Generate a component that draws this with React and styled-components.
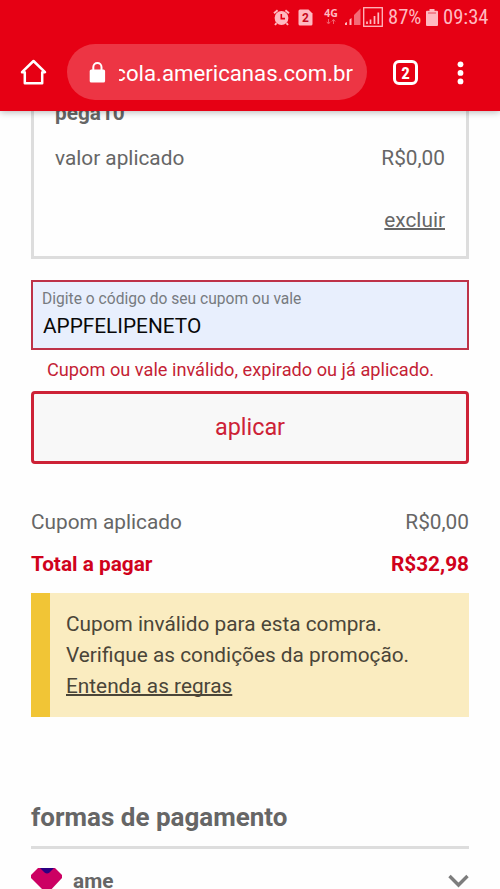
import React from "react";
import styled, { createGlobalStyle } from "styled-components";

const GlobalStyle = createGlobalStyle`
  * {
    box-sizing: border-box;
  }

  body {
    margin: 0;
    background-color: #fefefe;
    font-family: Roboto, "Liberation Sans", sans-serif;
    color: #666;
  }
`;

const Page = styled.div`
  width: 500px;
  height: 889px;
  overflow: hidden;
  display: flex;
  flex-direction: column;
`;

const Header = styled.header`
  height: 111px;
  flex-shrink: 0;
  background-color: #e60014;
  box-shadow: 0 1px 7px rgba(0, 0, 0, 0.3);
  z-index: 1;
`;

const StatusBar = styled.div`
  height: 34px;
  padding-right: 11px;
  display: flex;
  align-items: center;
  justify-content: flex-end;
  color: #ffb9c0;
`;

const StatusIcon = styled.svg`
  display: block;
  flex-shrink: 0;
  margin-right: ${(props) => props.$gap || 0}px;
`;

const Network = styled.div`
  width: 14px;
  height: 20px;
  margin-right: 6px;
  display: flex;
  flex-direction: column;
  align-items: center;
  font-family: "Open Sans", sans-serif;
  font-size: 10.5px;
  line-height: 12px;
  font-weight: 700;
`;

const StatusText = styled.span`
  width: ${(props) => props.$width}px;
  margin-right: ${(props) => props.$gap || 0}px;
  font-family: "Roboto Condensed", Roboto, sans-serif;
  font-size: 20.6px;
  line-height: 34px;
  white-space: nowrap;
`;

const Toolbar = styled.div`
  height: 77px;
  padding: 0 20px 0 20px;
  display: flex;
  align-items: center;
`;

const AddressBar = styled.div`
  width: 300px;
  height: 56px;
  margin: -1px 26px 0 20px;
  padding: 0 14px 0 22px;
  border-radius: 28px;
  background-color: #ed3544;
  display: flex;
  align-items: center;
  justify-content: space-between;
`;

const Address = styled.div`
  width: 234px;
  padding-top: 1px;
  display: flex;
  justify-content: flex-end;
  overflow: hidden;
  color: #fff;
  font-size: 22.2px;
  line-height: 30px;
  white-space: nowrap;
`;

const TabCount = styled.div`
  width: 25px;
  height: 25px;
  margin-right: 39px;
  border: 3px solid #fff;
  border-radius: 6px;
  display: flex;
  align-items: center;
  justify-content: center;
  color: #fff;
  font-family: "Roboto Condensed", Roboto, sans-serif;
  font-size: 17px;
  font-weight: 700;
`;

const Content = styled.main`
  flex: 1;
  padding: 0 31px;
  display: flex;
  flex-direction: column;
  overflow: hidden;
  font-size: 20.8px;
  line-height: 28px;
`;

const CouponCard = styled.section`
  height: 160px;
  flex-shrink: 0;
  margin-top: -12px;
  padding: 0 21px;
  border: 3px solid #ddd;
  border-top: none;
`;

const CouponName = styled.div`
  font-weight: 700;
  margin-bottom: 17px;
`;

const Row = styled.div`
  display: flex;
  justify-content: space-between;
  margin-bottom: ${(props) => props.$gap || 0}px;
  color: ${(props) => (props.$total ? "#d0021b" : "#666")};
  font-weight: ${(props) => (props.$total ? 700 : 400)};
`;

const Link = styled.a`
  display: ${(props) => (props.$right ? "block" : "inline")};
  text-align: ${(props) => (props.$right ? "right" : "left")};
  text-decoration: underline;
  text-decoration-thickness: 1.5px;
  text-decoration-skip-ink: none;
`;

const Field = styled.label`
  height: 70px;
  flex-shrink: 0;
  margin-top: 21px;
  padding: 7px 10px 0 9px;
  border: 2px solid #be3248;
  background-color: #e8effd;
  display: block;
`;

const FieldLabel = styled.div`
  color: #777b80;
  font-size: 15.6px;
  line-height: 20px;
`;

const FieldValue = styled.input`
  display: block;
  width: 100%;
  height: 28px;
  margin-top: 3px;
  padding: 0 1px;
  border: 0;
  outline: none;
  background: transparent;
  color: #080808;
  font-family: inherit;
  font-size: 20.8px;
`;

const ErrorText = styled.p`
  margin: 8px 0 9px 16px;
  color: #c41f35;
  font-size: 18.2px;
  line-height: 24px;
  white-space: nowrap;
`;

const ApplyButton = styled.button`
  height: 73px;
  flex-shrink: 0;
  margin-bottom: 44px;
  padding: 0 0 2px;
  border: 3px solid #cd2236;
  border-radius: 4px;
  background-color: #f8f8f8;
  color: #cd2236;
  font-family: inherit;
  font-size: 23.4px;
`;

const Alert = styled.div`
  height: 124px;
  flex-shrink: 0;
  margin-top: 15px;
  padding: 16px 0 0 16px;
  border-left: 19px solid #f1c536;
  background-color: #faecc0;
  color: #4a4538;
  line-height: 31px;
`;

const Heading = styled.h2`
  height: 50px;
  flex-shrink: 0;
  margin: 82px 0 0;
  padding-top: 3px;
  border-bottom: 3px solid #ddd;
  font-size: 26px;
  font-weight: 700;
  line-height: 30px;
`;

const PaymentOption = styled.div`
  height: 60px;
  flex-shrink: 0;
  padding-top: 18px;
  display: flex;
  align-items: flex-start;
  font-weight: 700;

  svg:first-child {
    margin: 1px 11px 0 0;
  }

  svg:last-child {
    margin: 7px 0 0 auto;
  }
`;

const App = () => {
  return (
    <Page>
      <GlobalStyle />
      <Header>
        <StatusBar>
          <StatusIcon width="17" height="17" viewBox="0 0 17 17" $gap={8}>
            <circle cx="8.5" cy="9" r="6.9" fill="currentColor" />
            <path d="M1 4.3 4.6 1.2M16 4.3 12.4 1.2M3.5 14.2 2 16M13.5 14.2 15 16" stroke="currentColor" strokeWidth="1.9" />
            <path d="M8.3 5V9.6H12" fill="none" stroke="#e60014" strokeWidth="1.6" />
          </StatusIcon>
          <StatusIcon width="15" height="17" viewBox="0 0 15 17" $gap={11}>
            <path d="M2 .5H10.5L14.5 4.5V15Q14.5 16.5 13 16.5H2Q.5 16.5 .5 15V2Q.5 .5 2 .5Z" fill="currentColor" />
            <text x="7.5" y="13" textAnchor="middle" fontSize="12" fontWeight="700" fill="#c50a1b">2</text>
          </StatusIcon>
          <Network>
            4G
            <svg width="10" height="6" viewBox="0 0 10 6">
              <path d="M2.5 0V4M.8 2.8 2.5 5 4.2 2.8M7.5 5V1M5.8 2.5 7.5 .3 9.2 2.5" fill="none" stroke="#f0616e" />
            </svg>
          </Network>
          <StatusIcon width="17" height="18" viewBox="0 0 17 18" $gap={2}>
            <path d="M1 17V15L3 14V17ZM5.5 17V11.5L7.5 10V17Z" fill="currentColor" />
            <path d="M10 17V7L16.5 .5V17Z" fill="#f46a77" />
          </StatusIcon>
          <StatusIcon width="20" height="20" viewBox="0 0 20 20" $gap={5}>
            <rect x=".7" y=".7" width="18.6" height="18.6" fill="none" stroke="currentColor" strokeWidth="1.3" />
            <path d="M4 17V14.5M7.5 17V12.5M11.5 17V9M15.3 17V5.5" stroke="currentColor" strokeWidth="1.7" />
          </StatusIcon>
          <StatusText $width={34} $gap={4}>87%</StatusText>
          <StatusIcon width="12" height="17" viewBox="0 0 12 17" $gap={5}>
            <path d="M3.5 0H8.5V1.7H11Q12 1.7 12 2.7V16Q12 17 11 17H1Q0 17 0 16V2.7Q0 1.7 1 1.7H3.5Z" fill="currentColor" />
            <path d="M2 4H10" stroke="#e8485a" />
          </StatusIcon>
          <StatusText $width={46}>09:34</StatusText>
        </StatusBar>
        <Toolbar>
          <svg width="27" height="27" viewBox="0 0 27 27">
            <path
              d="M2 13.2 13.5 2 25 13.2H22.2V24.3H4.8V13.2Z"
              fill="none"
              stroke="#fff"
              strokeWidth="2.5"
              strokeLinejoin="round"
            />
          </svg>
          <AddressBar>
            <svg width="17" height="21" viewBox="0 0 17 21">
              <rect x=".7" y="7.5" width="15.4" height="13" rx="1.6" fill="#fff" />
              <path d="M4.3 8V5.2a4.1 4.1 0 0 1 8.2 0V8" fill="none" stroke="#fff" strokeWidth="2" />
            </svg>
            <Address>cola.americanas.com.br</Address>
          </AddressBar>
          <TabCount>2</TabCount>
          <svg width="7" height="24" viewBox="0 0 7 24">
            <circle cx="3.5" cy="3.3" r="2.9" fill="#fff" />
            <circle cx="3.5" cy="11.9" r="2.9" fill="#fff" />
            <circle cx="3.5" cy="20.4" r="2.9" fill="#fff" />
          </svg>
        </Toolbar>
      </Header>

      <Content>
        <CouponCard>
          <CouponName>pega10</CouponName>
          <Row $gap={34}>
            <span>valor aplicado</span>
            <span>R$0,00</span>
          </Row>
          <Link $right>excluir</Link>
        </CouponCard>

        <Field>
          <FieldLabel>Digite o código do seu cupom ou vale</FieldLabel>
          <FieldValue defaultValue="APPFELIPENETO" />
        </Field>
        <ErrorText>Cupom ou vale inválido, expirado ou já aplicado.</ErrorText>
        <ApplyButton>aplicar</ApplyButton>

        <Row $gap={14}>
          <span>Cupom aplicado</span>
          <span>R$0,00</span>
        </Row>
        <Row $total>
          <span>Total a pagar</span>
          <span>R$32,98</span>
        </Row>

        <Alert>
          Cupom inválido para esta compra.
          <br />
          Verifique as condições da promoção.
          <br />
          <Link>Entenda as regras</Link>
        </Alert>

        <Heading>formas de pagamento</Heading>
        <PaymentOption>
          <svg width="31" height="28" viewBox="0 0 31 28">
            <path d="M7 0H24L31 7V10L16 26L0 10V7Z" fill="#cc0063" />
            <path d="M9 0H23L18.5 4.5Q16 6.5 13.5 4.5Z" fill="#2b0082" />
          </svg>
          <span>ame</span>
          <svg width="21" height="15" viewBox="0 0 21 15">
            <path d="M1.5 2 10.5 11 19.5 2" fill="none" stroke="#7d7d7d" strokeWidth="3.4" />
          </svg>
        </PaymentOption>
      </Content>
    </Page>
  );
};

export default App;
